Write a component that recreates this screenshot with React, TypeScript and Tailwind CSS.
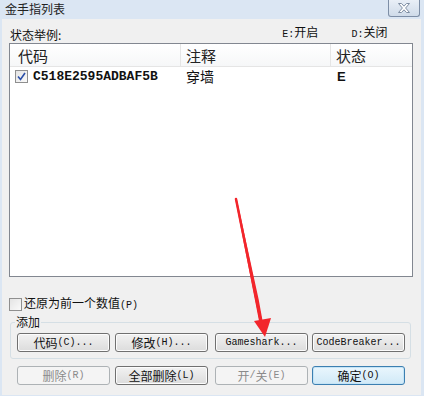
import React from "react";

const cjk = '"Noto Sans CJK SC", "Liberation Sans", sans-serif';
const mono = '"Liberation Mono", "Noto Sans CJK SC", monospace';

// CJK glyphs at 12px, latin bits in a narrow mono face, like the old dialog font
const Label = ({ text }: { text: string }) => {
  const parts = text.match(/[\u4e00-\u9fff]+|[^\u4e00-\u9fff]+/g) || [];
  return (
    <>
      {parts.map((p, i) =>
        /[\u4e00-\u9fff]/.test(p) ? (
          <span key={i} className="text-[12px]" style={{ fontFamily: cjk }}>
            {p}
          </span>
        ) : (
          <span key={i} className="text-[10px]" style={{ fontFamily: mono }}>
            {p}
          </span>
        )
      )}
    </>
  );
};

const Btn = ({
  text,
  disabled,
  primary,
  cls = "",
}: {
  text: string;
  disabled?: boolean;
  primary?: boolean;
  cls?: string;
}) => {
  let c =
    "w-[93px] h-[19px] shrink-0 rounded-[3px] flex items-center justify-center leading-none " + cls + " ";
  if (disabled) {
    c += "border border-[#adb2b5] bg-[#f4f4f4] text-[#8a8a8a]";
  } else if (primary) {
    c +=
      "border border-[#3c7fb1] bg-gradient-to-b from-[#eaf6fd] to-[#d0e9f7] text-[#111] shadow-[inset_0_0_0_1px_#c5e4f6]";
  } else {
    c +=
      "border border-[#707070] bg-gradient-to-b from-[#f2f2f2] to-[#dcdcdc] text-[#111] shadow-[inset_0_0_0_1px_#fcfcfc]";
  }
  return (
    <div className={c}>
      <Label text={text} />
    </div>
  );
};

const CheckBox = ({ checked }: { checked?: boolean }) => (
  <div className="w-[13px] h-[13px] shrink-0 border border-[#8f8f8f] bg-gradient-to-br from-[#e4e4e4] to-[#fafafa] flex items-center justify-center">
    {checked && (
      <svg width="9" height="9" viewBox="0 0 9 9">
        <path d="M1 4.5 L3.5 7.5 L8 1" fill="none" stroke="#2b4fa8" strokeWidth="1.6" />
      </svg>
    )}
  </div>
);

export default function App() {
  return (
    <div className="relative w-[424px] h-[396px] bg-[#dbe6f3] overflow-hidden flex flex-col">
      {/* title bar */}
      <div className="h-[19px] flex items-start justify-between shrink-0">
        <span className="ml-[5px] mt-[2px] text-[12px] leading-[14px] text-[#222]" style={{ fontFamily: cjk }}>
          金手指列表
        </span>
        <div className="mr-[4px] w-[32px] h-[17px] rounded-b-[3px] border border-t-0 border-[#7d8ea6] bg-gradient-to-b from-[#e9eff7] to-[#cfdbe9] flex items-center justify-center">
          <svg width="14" height="10" viewBox="0 0 14 10">
            <path
              d="M1.5 0.5 H4.5 L7 3.2 L9.5 0.5 H12.5 L8.6 5 L12.5 9.5 H9.5 L7 6.8 L4.5 9.5 H1.5 L5.4 5 Z"
              fill="#fff"
              stroke="#7f8ea3"
              strokeWidth="1"
            />
          </svg>
        </div>
      </div>

      {/* body */}
      <div className="flex-1 ml-[2px] mr-[3px] mb-[1px] bg-[#f0f0f0] flex flex-col px-[7px]">
        <div className="h-[23px] flex items-end text-[12px] leading-[14px] text-[#111]" style={{ fontFamily: cjk }}>
          <span className="ml-[1px]">状态举例:</span>
          <span className="ml-[221px]">
            <Label text="E:开启" />
          </span>
          <span className="ml-[33px]">
            <Label text="D:关闭" />
          </span>
        </div>

        {/* list */}
        <div className="mt-[1px] w-[404px] h-[234px] border border-[#828790] bg-white flex flex-col">
          <div className="h-[23px] flex bg-gradient-to-b from-white to-[#f6f7f8] border-b border-[#e5e5e5] text-[15px] leading-[18px] text-[#222]" style={{ fontFamily: cjk }}>
            <div className="w-[171px] pl-[8px] pt-[3px] border-r border-[#e5e5e5]">代码</div>
            <div className="w-[150px] pl-[5px] pt-[3px] border-r border-[#e5e5e5]">注释</div>
            <div className="flex-1 pl-[5px] pt-[3px]">状态</div>
          </div>
          <div className="h-[19px] flex items-center text-[#111]">
            <div className="w-[171px] flex items-center pl-[5px] gap-[5px]">
              <CheckBox checked />
              <span className="text-[13px] font-bold" style={{ fontFamily: mono }}>
                C518E2595ADBAF5B
              </span>
            </div>
            <div className="w-[151px] pl-[5px] text-[14px]" style={{ fontFamily: cjk }}>
              穿墙
            </div>
            <div className="pl-[5px] text-[13px] font-bold" style={{ fontFamily: '"Liberation Sans", sans-serif' }}>
              E
            </div>
          </div>
        </div>

        <div className="mt-[20px] h-[14px] leading-[14px] flex items-center gap-[2px] text-[#111]">
          <CheckBox />
          <span className="leading-[14px]">
            <Label text="还原为前一个数值(P)" />
          </span>
        </div>

        {/* group box */}
        <div className="relative mt-[11px] ml-[1px] w-[401px] h-[37px] border border-[#d5dfe5] rounded-[3px] flex items-start pl-[6px] pt-[10px]">
          <span className="absolute -top-[8px] left-[4px] px-[1px] bg-[#f0f0f0] text-[12px] leading-[14px] text-[#111]" style={{ fontFamily: cjk }}>
            添加
          </span>
          <Btn text="代码(C)..." />
          <Btn text="修改(H)..." cls="ml-[5px]" />
          <Btn text="Gameshark..." cls="ml-[7px]" />
          <Btn text="CodeBreaker..." cls="ml-[4px]" />
        </div>

        <div className="mt-[7px] ml-[8px] flex">
          <Btn text="删除(R)" disabled />
          <Btn text="全部删除(L)" cls="ml-[5px]" />
          <Btn text="开/关(E)" disabled cls="ml-[7px]" />
          <Btn text="确定(O)" primary cls="ml-[4px]" />
        </div>
      </div>

      {/* red annotation arrow */}
      <svg className="absolute left-0 top-0 pointer-events-none" width="424" height="396">
        <path d="M236 199 L258 300 L262 322 L260 322 Z" fill="#f2262c" stroke="#f2262c" strokeWidth="1.5" strokeLinejoin="round" />
        <path d="M236 199 L261 322" stroke="#f2262c" strokeWidth="2.5" strokeLinecap="round" />
        <path d="M254 321 L271 318 L265 337 Z" fill="#f2262c" />
      </svg>
    </div>
  );
}
